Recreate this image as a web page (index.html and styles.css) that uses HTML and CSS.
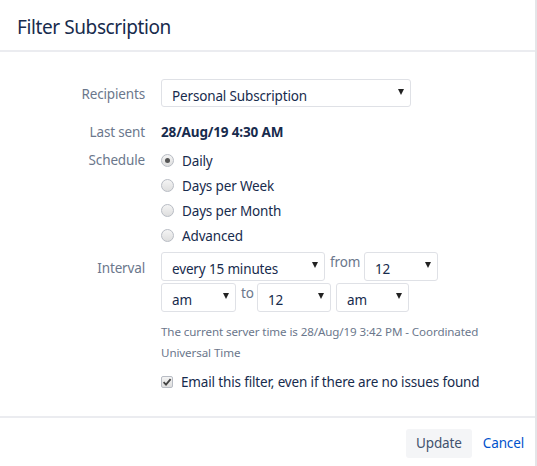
FILE: index.html
```html
<!DOCTYPE html>
<html>
<head>
<meta charset="utf-8">
<link rel="stylesheet" href="styles.css">
</head>
<body>
<div class="dialog">
  <header class="dlg-header"><h2 class="dlg-title">Filter Subscription</h2></header>
  <div class="dlg-body">
    <div class="row row-recipients">
      <div class="label">Recipients</div>
      <div class="field">
        <div class="select sel-recipients"><span class="sel-text">Personal Subscription</span><span class="arrow"></span></div>
      </div>
    </div>
    <div class="row row-last">
      <div class="label">Last sent</div>
      <div class="field value">28/Aug/19 4:30 AM</div>
    </div>
    <div class="row row-schedule">
      <div class="label">Schedule</div>
      <div class="field radios">
        <div class="radio-row"><span class="radio checked"></span><span>Daily</span></div>
        <div class="radio-row"><span class="radio"></span><span>Days per Week</span></div>
        <div class="radio-row"><span class="radio"></span><span>Days per Month</span></div>
        <div class="radio-row"><span class="radio"></span><span>Advanced</span></div>
      </div>
    </div>
    <div class="row row-interval">
      <div class="label">Interval</div>
      <div class="field interval">
        <div class="int-line">
          <div class="select sel-every"><span class="sel-text">every 15 minutes</span><span class="arrow"></span></div>
          <span class="conj conj-from">from</span>
          <div class="select sel-num"><span class="sel-text">12</span><span class="arrow"></span></div>
        </div>
        <div class="int-line">
          <div class="select sel-ampm"><span class="sel-text">am</span><span class="arrow"></span></div>
          <span class="conj conj-to">to</span>
          <div class="select sel-num2"><span class="sel-text">12</span><span class="arrow"></span></div>
          <div class="select sel-ampm2"><span class="sel-text">am</span><span class="arrow"></span></div>
        </div>
        <p class="desc">The current server time is 28/Aug/19 3:42 PM - Coordinated Universal Time</p>
        <div class="check-row"><span class="checkbox"><svg viewBox="0 0 12 12" width="12" height="12"><path d="M2.6 6.2 L5 8.6 L9.6 3.2" fill="none" stroke="#444" stroke-width="1.8"/></svg></span><span>Email this filter, even if there are no issues found</span></div>
      </div>
    </div>
  </div>
  <footer class="dlg-footer">
    <button class="btn-update">Update</button>
    <a class="cancel" href="#">Cancel</a>
  </footer>
</div>
</body>
</html>
```

FILE: styles.css
```css
html, body {
  margin: 0;
  padding: 0;
  background: #fff;
}
body {
  font-family: "Noto Sans", "Open Sans", sans-serif;
  font-size: 13.5px;
  letter-spacing: -0.15px;
  color: #172b4d;
}
.dialog {
  width: 535px;
  height: 466px;
  border-right: 2px solid #e4e5e8;
  display: flex;
  flex-direction: column;
}
.dlg-header {
  box-sizing: border-box;
  height: 52px;
  border-bottom: 2px solid #ebecf0;
  padding: 15px 17px 0;
}
.dlg-title {
  margin: 0;
  font-weight: 400;
  font-size: 19px;
  letter-spacing: -0.4px;
  color: #172b4d;
  line-height: 24px;
}
.dlg-body {
  padding-top: 27px;
  flex: 1;
}
.row {
  display: grid;
  grid-template-columns: 145px 1fr;
  column-gap: 16px;
}
.label {
  text-align: right;
  color: #6b778c;
  line-height: 20px;
}
.row-recipients .label { padding-top: 5px; }
.select {
  box-sizing: border-box;
  height: 29px;
  border: 1px solid #dfe1e6;
  border-radius: 3px;
  background: #fff;
  display: flex;
  align-items: flex-start;
  justify-content: space-between;
  padding: 6px 6px 0 10px;
  line-height: 20px;
  color: #172b4d;
}
.arrow {
  width: 0;
  height: 0;
  border-left: 3.5px solid transparent;
  border-right: 3.5px solid transparent;
  border-top: 6px solid #222;
  margin-top: 3px;
}
.sel-recipients { width: 250px; height: 28px; }
.row-last { margin-top: 15px; }
.value { font-weight: 700; line-height: 20px; }
.row-schedule { margin-top: 8px; }
.radios { margin-top: -2px; }
.radio-row {
  display: flex;
  align-items: center;
  gap: 8px;
  height: 25px;
  line-height: 20px;
}
.radio {
  width: 11px;
  height: 11px;
  border-radius: 50%;
  border: 1px solid #b8bcc4;
  background: linear-gradient(#f4f4f4, #dedede);
  position: relative;
  flex: none;
}
.radio.checked::after {
  content: "";
  position: absolute;
  left: 3px;
  top: 3px;
  width: 5px;
  height: 5px;
  border-radius: 50%;
  background: #555;
}
.row-interval { margin-top: 4px; }
.row-interval .label { padding-top: 6px; }
.int-line {
  display: flex;
  align-items: flex-start;
  gap: 5px;
  margin-bottom: 2px;
}
.conj { color: #6b778c; line-height: 20px; white-space: nowrap; }
.conj-from { width: 29px; }
.conj-to { width: 11px; }
.sel-every { width: 164px; }
.sel-num { width: 74px; }
.sel-ampm { width: 75px; }
.sel-num2 { width: 74px; }
.sel-ampm2 { width: 73px; }
.desc {
  margin: 9px 0 0;
  font-size: 11.6px;
  letter-spacing: -0.1px;
  line-height: 21px;
  color: #6b778c;
  width: 330px;
}
.check-row {
  display: flex;
  align-items: center;
  gap: 8px;
  margin-top: 9px;
  line-height: 20px;
}
.checkbox {
  width: 12px;
  height: 12px;
  box-sizing: border-box;
  border: 1px solid #b8bcc4;
  border-radius: 2px;
  background: linear-gradient(#f4f4f4, #dedede);
  display: flex;
  flex: none;
}
.checkbox svg { margin: -1px; }
.dlg-footer {
  box-sizing: border-box;
  border-top: 2px solid #ebecf0;
  height: 50px;
  display: flex;
  justify-content: flex-end;
  align-items: flex-start;
  padding: 11px 11px 0 0;
}
.btn-update {
  font: inherit;
  letter-spacing: inherit;
  width: 66px;
  height: 29px;
  border: none;
  border-radius: 3px;
  background: #f4f5f7;
  color: #42526e;
  padding: 0;
  line-height: 29px;
}
.cancel {
  color: #0052cc;
  text-decoration: none;
  margin-left: 11px;
  line-height: 29px;
}
```
